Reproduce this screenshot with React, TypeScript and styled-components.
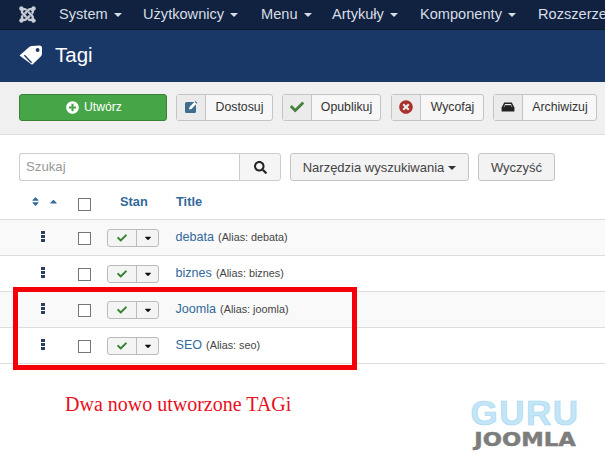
import React from "react";
import styled, { createGlobalStyle } from "styled-components";
import { FaJoomla, FaCheck, FaPlusCircle, FaTimesCircle, FaSearch, FaSort, FaCaretUp, FaCaretDown } from "react-icons/fa";

const Global = createGlobalStyle`
  html, body { margin: 0; padding: 0; background: #fff; }
  body { width: 605px; height: 469px; overflow: hidden; font-family: "Liberation Sans", Arial, sans-serif; }
  * { box-sizing: border-box; }
`;
const Page = styled.div`position: relative; width: 605px; height: 469px; overflow: hidden; background: #fff;`;
const Nav = styled.nav`
  height: 30px; display: flex; align-items: center; background: #10223f; border-bottom: 1px solid #0b1930;
  padding-left: 18px; white-space: nowrap; overflow: hidden; color: #d8dde6; font-size: 14.6px;
`;
const NavLogo = styled.span`display: flex; flex: none; width: 41px; color: #c9ced6; font-size: 19px;`;
const NavItem = styled.span`
  display: inline-flex; align-items: center; flex: none; width: ${p => p.$w}px; padding-bottom: 2px;
`;
const Caret = styled.i`
  display: inline-block; width: 0; height: 0; margin-left: ${p => p.$gap ?? 6}px; margin-top: 2px;
  border-left: 4px solid transparent; border-right: 4px solid transparent;
  border-top: 4px solid ${p => p.$color ?? "#d8dde6"};
`;
const TitleBar = styled.header`
  height: 52px; background: #1a3867; display: flex; align-items: center; gap: 13px; padding: 0 0 3px 19px;
  color: #fff; font-size: 20.5px;
`;
const Toolbar = styled.div`
  height: 53px; background: #f0f0f0; border-bottom: 1px solid #dedede; display: flex; align-items: center;
  padding: 0 0 2px 19px;
`;
const CreateBtn = styled.button`
  width: 148px; height: 27px; margin-right: 9px; border: 1px solid #378137; border-radius: 3px; background: #46a546;
  color: #fff; font: 12.2px "Liberation Sans", sans-serif; display: flex; align-items: center; justify-content: center; gap: 5px; padding: 0 0 0 2px;
  svg { font-size: 13px; }
`;
const ToolBtn = styled.button`
  width: ${p => p.$w}px; height: 27px; margin-right: ${p => p.$mr}px; flex: none; padding: 0; display: flex; align-items: stretch;
  background: #f7f7f7; border: 1px solid #c4c4c4; border-radius: 3px; color: #333; font: 12.3px "Liberation Sans", sans-serif;
`;
const ToolIcon = styled.span`
  width: 29px; flex: none; display: flex; align-items: center; justify-content: center; background: #ebebeb;
  border-right: 1px solid #c4c4c4; color: ${p => p.$color}; font-size: 14px;
`;
const ToolLabel = styled.span`flex: 1; display: flex; align-items: center; justify-content: center; padding-left: 1px;`;
const Filters = styled.div`display: flex; align-items: flex-start; padding: 18px 0 0 19px; height: 56px;`;
const SearchInput = styled.div`
  width: 220px; height: 28px; border: 1px solid #ccc; border-right: 0; border-radius: 3px 0 0 3px; background: #fff;
  color: #999; font-size: 13.2px; line-height: 26px; padding-left: 6px;
`;
const SearchBtn = styled.button`
  width: 42px; height: 28px; margin-right: 9px; padding: 0; border: 1px solid #ccc; border-radius: 0 3px 3px 0; background: #f5f5f5; color: #222; font-size: 13px;
  display: flex; align-items: center; justify-content: center;
`;
const FilterBtn = styled.button`
  width: ${p => p.$w}px; height: 28px; margin-right: 9px; padding: 0; border: 1px solid #c4c4c4; border-radius: 3px; background: #f3f3f3;
  color: #444; font: 13px "Liberation Sans", sans-serif; display: flex; align-items: center; justify-content: center;
`;
const Row = styled.div`
  display: grid; grid-template-columns: 78px 29px 69px 1fr; height: ${p => p.$h ?? 36}px;
  border-bottom: 1px solid #ddd; background: ${p => p.$odd ? "#f9f9f9" : "#fff"}; padding-top: ${p => p.$pt ?? 9}px;
`;
const SortCell = styled.div`display: flex; align-items: flex-start; gap: 7px; padding: 1px 0 0 30px; color: #33699b; font-size: 11px;`;
const DragCell = styled.div`display: flex; flex-direction: column; gap: 1px; padding: 2px 0 0 41px;`;
const Dot = styled.i`display: block; width: 4px; height: 3px; background: #2b3f60;`;
const Check = styled.span`display: block; width: 13px; height: 13px; border: 1px solid #767676; background: #fff; margin-top: 3px;`;
const HeadLabel = styled.span`color: #33699b; font-weight: bold; font-size: 12.8px; line-height: 15px; margin-top: -1px;`;
const HeadStan = styled(HeadLabel)`padding-left: 13px; white-space: nowrap;`;
const StateGroup = styled.div`
  width: 52px; height: 18px; display: flex; border: 1px solid #bbb; border-radius: 3px; background: #f4f4f4;
`;
const StatePart = styled.span`
  width: ${p => p.$w}px; display: flex; align-items: center; justify-content: center; font-size: 10px; color: #378137;
  & + & { border-left: 1px solid #bbb; }
`;
const Name = styled.div`font-size: 12.6px; color: #33699b; line-height: 16px; margin-left: -0.5px;`;
const Alias = styled.span`font-size: 10.8px; color: #444; margin-left: 4px;`;
const Highlight = styled.div`
  position: absolute; left: 13px; top: 287px; width: 344px; height: 83px; border: 5px solid #f40009;
`;
const Caption = styled.div`
  position: absolute; left: 65px; top: 393px; font: 20px "Liberation Serif", serif; color: #e6101c; white-space: nowrap;
`;
const Brand = styled.div`position: absolute; left: 470px; top: 397px; width: 110px; text-align: center;`;
const BrandTop = styled.div`
  font: bold 35px "Liberation Sans", sans-serif; color: #c3e5f7; -webkit-text-stroke: 0.7px #a9d9f1; letter-spacing: 1.5px; line-height: 31px;
`;
const BrandBottom = styled.div`
  font: bold 19px "DejaVu Sans", sans-serif; color: #7d7d7d; -webkit-text-stroke: 0.5px #7d7d7d; line-height: 22px; transform: scaleX(1.19);
`;

const TagIcon = () => (
  <svg width="23" height="20" viewBox="0 0 23 20" fill="none">
    <path d="M0.5 10.5 L10.5 1.8 Q11.5 1 13 1 L20.5 0.6 Q23 0.6 23 3.2 L23 8.6 Q23 10.2 22 11.2 L14 19 Q13 20 12 19 Z" fill="#fff" />
    <circle cx="18.6" cy="5" r="1.9" fill="#1a3867" />
    <path d="M5.4 10.2 L12.6 17.8" stroke="#1a3867" strokeWidth="1.4" />
  </svg>
);
const EditIcon = () => (
  <svg width="14" height="14" viewBox="0 0 14 14">
    <rect x="1" y="2" width="11" height="11" rx="1.5" fill="#3f6d8e" />
    <path d="M5 9.5 L5.5 7 L10.8 1.6 L12.8 3.6 L7.5 9 Z" fill="#fff" />
    <path d="M11.4 1 L13.4 3 L12.6 3.8 L10.6 1.8 Z" fill="#3f6d8e" />
  </svg>
);
const ArchiveIcon = () => (
  <svg width="14" height="12" viewBox="0 0 14 12">
    <path d="M3.2 1.5 H10.8 L13.4 6.5 V10.5 H0.6 V6.5 Z" fill="#222" />
    <path d="M4 3 H10 L11.4 6 H2.6 Z" fill="#ebebeb" />
    <rect x="3.5" y="4.2" width="7" height="1.8" fill="#222" />
  </svg>
);

const nav: [string, number][] = [["System", 84], ["Użytkownicy", 118], ["Menu", 71], ["Artykuły", 88], ["Komponenty", 118], ["Rozszerzenia", 120]];
const tools = [
  { label: "Dostosuj", w: 97, mr: 9, color: "#3f6d8e", icon: <EditIcon /> },
  { label: "Opublikuj", w: 99, mr: 10, color: "#46803f", icon: <FaCheck /> },
  { label: "Wycofaj", w: 93, mr: 9, color: "#a9302a", icon: <FaTimesCircle /> },
  { label: "Archiwizuj", w: 104, mr: 0, color: "#333", icon: <ArchiveIcon /> },
];
const rows = [["debata", "debata"], ["biznes", "biznes"], ["Joomla", "joomla"], ["SEO", "seo"]];

export default function App() {
  return (
    <Page>
      <Global />
      <Nav>
        <NavLogo><FaJoomla /></NavLogo>
        {nav.map(([t, w], i) => (
          <NavItem key={t} $w={w}>{t}{i < 5 && <Caret />}</NavItem>
        ))}
      </Nav>
      <TitleBar><TagIcon />Tagi</TitleBar>
      <Toolbar>
        <CreateBtn><FaPlusCircle />Utwórz</CreateBtn>
        {tools.map(t => (
          <ToolBtn key={t.label} $w={t.w} $mr={t.mr}>
            <ToolIcon $color={t.color}>{t.icon}</ToolIcon>
            <ToolLabel>{t.label}</ToolLabel>
          </ToolBtn>
        ))}
      </Toolbar>
      <Filters>
        <SearchInput>Szukaj</SearchInput>
        <SearchBtn><FaSearch /></SearchBtn>
        <FilterBtn $w={179}>Narzędzia wyszukiwania<Caret $gap={4} $color="#333" /></FilterBtn>
        <FilterBtn $w={77}>Wyczyść</FilterBtn>
      </Filters>
      <Row $h={29} $pt={4}>
        <SortCell><FaSort /><FaCaretUp /></SortCell>
        <Check />
        <HeadStan>Stan</HeadStan>
        <HeadLabel>Title</HeadLabel>
      </Row>
      {rows.map(([n, a], i) => (
        <Row key={n} $odd={i % 2 === 0}>
          <DragCell><Dot /><Dot /><Dot /></DragCell>
          <Check />
          <StateGroup>
            <StatePart $w={29}><FaCheck /></StatePart>
            <StatePart $w={22}><FaCaretDown color="#111" /></StatePart>
          </StateGroup>
          <Name>{n}<Alias>(Alias: {a})</Alias></Name>
        </Row>
      ))}
      <Highlight />
      <Caption>Dwa nowo utworzone TAGi</Caption>
      <Brand>
        <BrandTop>GURU</BrandTop>
        <BrandBottom>JOOMLA</BrandBottom>
      </Brand>
    </Page>
  );
}
